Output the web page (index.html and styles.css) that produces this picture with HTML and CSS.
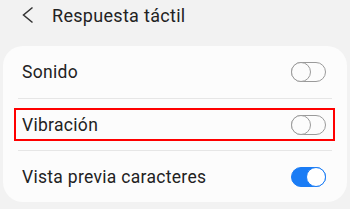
FILE: index.html
```html
<!DOCTYPE html>
<html lang="es">
<head>
    <meta charset="UTF-8">
    <title>Respuesta táctil</title>
    <link rel="stylesheet" href="styles.css">
</head>
<body>
    <div class="header">
        <svg class="back" width="12" height="18" viewBox="0 0 12 18">
            <polyline points="10.5,1.5 1.5,9 10.5,16.5" fill="none" stroke="#333" stroke-width="1.5"/>
        </svg>
        <span class="title">Respuesta táctil</span>
    </div>

    <div class="card">
        <div class="row">
            <span class="label">Sonido</span>
            <span class="toggle"></span>
        </div>
        <div class="divider"></div>
        <div class="row">
            <span class="label">Vibración</span>
            <span class="toggle"></span>
            <div class="highlight"></div>
        </div>
        <div class="divider"></div>
        <div class="row">
            <span class="label">Vista previa caracteres</span>
            <span class="toggle on"></span>
        </div>
    </div>
</body>
</html>
```

FILE: styles.css
```css
body {
    font-family: 'Roboto', 'Noto Sans', sans-serif;
    background-color: #f2f2f2;
    color: #222;
    margin: 0;
    padding: 0;
}

.header {
    height: 46px;
    display: flex;
    align-items: center;
    padding-left: 22px;
    box-sizing: border-box;
    padding-bottom: 16px;
    padding-top: 0;
}

.back {
    margin-right: 18px;
}

.title {
    font-size: 18px;
    letter-spacing: 0.3px;
}

.card {
    margin-left: 3px;
    width: 344px;
    background-color: #fcfcfc;
    border-radius: 20px;
}

.row {
    position: relative;
    height: 51px;
    display: flex;
    align-items: center;
    justify-content: space-between;
    padding: 0 21px 0 19px;
}

.row:first-child {
    height: 52px;
}

.label {
    font-size: 17.5px;
    letter-spacing: 0.3px;
}

.divider {
    height: 1px;
    margin: 0 15px;
    background-color: #e6e6e6;
}

.toggle {
    position: relative;
    width: 33px;
    height: 18px;
    border: 1px solid #9a9a9a;
    border-radius: 10px;
    box-sizing: content-box;
}

.toggle::after {
    content: "";
    position: absolute;
    left: -1px;
    top: -1px;
    width: 18px;
    height: 18px;
    border: 1px solid #9a9a9a;
    border-radius: 50%;
    background-color: #fcfcfc;
}

.toggle.on {
    background-color: #1a7cf5;
    border-color: #1a7cf5;
}

.toggle.on::after {
    left: auto;
    right: -1px;
    border-color: #1a7cf5;
    background-color: #fff;
}

.highlight {
    position: absolute;
    left: 11px;
    top: 9px;
    width: 317px;
    height: 29px;
    border: 2px solid #f00;
}
```
